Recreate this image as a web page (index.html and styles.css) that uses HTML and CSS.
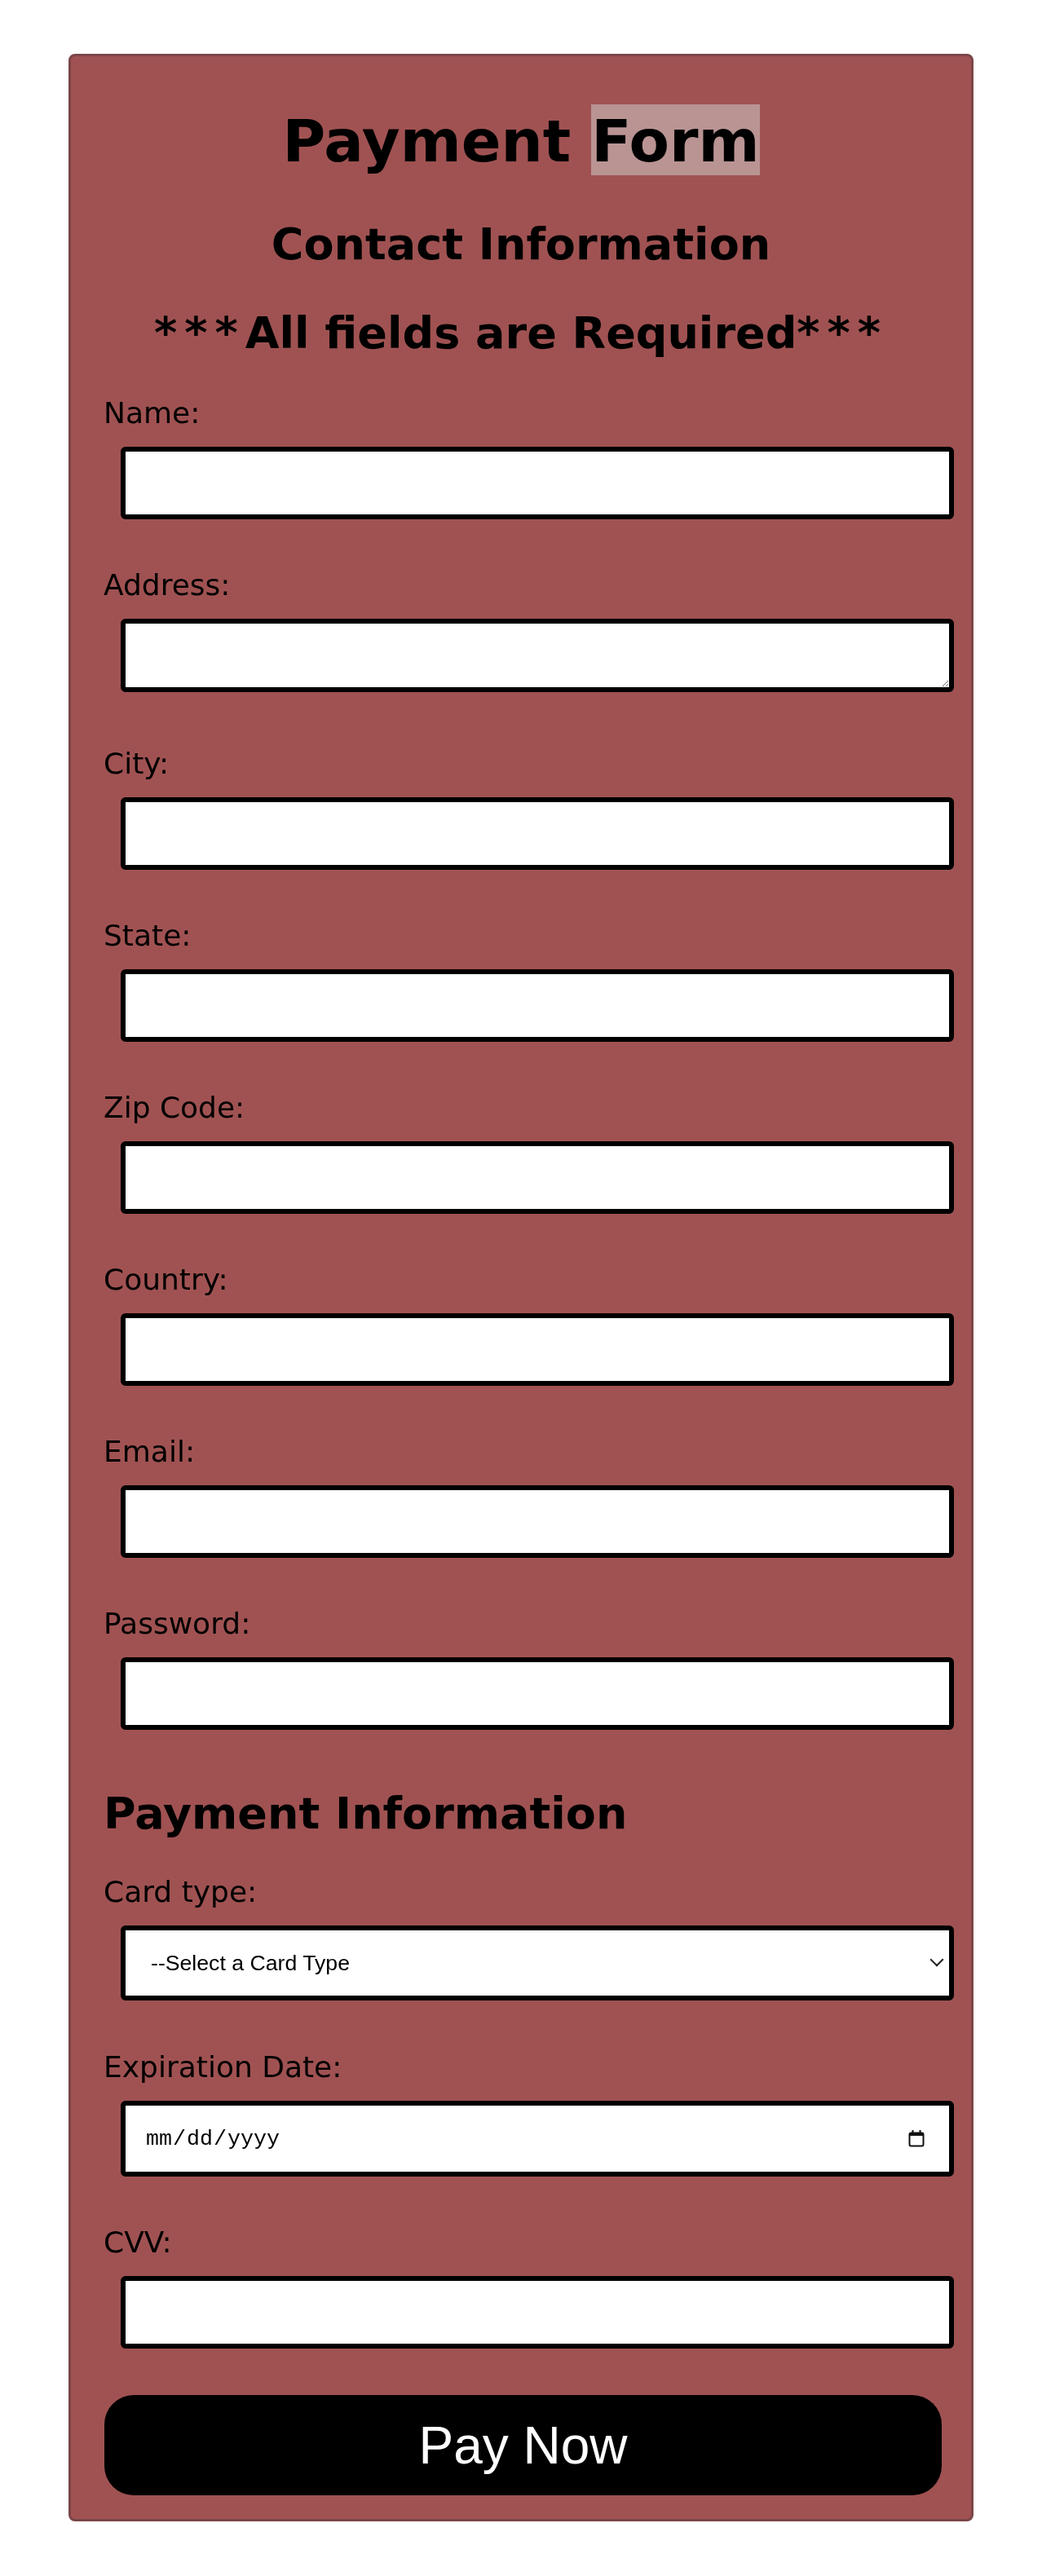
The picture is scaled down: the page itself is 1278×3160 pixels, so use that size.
FILE: index.html
```html
<!DOCTYPE html>
<html lang="en">
<head>
<meta charset="utf-8">
<title>Payment Form</title>
<link rel="stylesheet" href="styles.css">
</head>
<body>
<form class="card">
  <h1 class="title">Payment <span class="hl">Form</span></h1>
  <h2 class="subtitle">Contact Information</h2>
  <h2 class="subtitle"><span class="stars">***</span>All fields are Required<span class="stars">***</span></h2>

  <div class="field">
    <label for="name">Name:</label>
    <input class="control" id="name" type="text">
  </div>
  <div class="field field-area">
    <label for="address">Address:</label>
    <textarea class="control area" id="address"></textarea>
  </div>
  <div class="field">
    <label for="city">City:</label>
    <input class="control" id="city" type="text">
  </div>
  <div class="field">
    <label for="state">State:</label>
    <input class="control" id="state" type="text">
  </div>
  <div class="field">
    <label for="zip">Zip Code:</label>
    <input class="control" id="zip" type="text">
  </div>
  <div class="field">
    <label for="country">Country:</label>
    <input class="control" id="country" type="text">
  </div>
  <div class="field">
    <label for="email">Email:</label>
    <input class="control" id="email" type="email">
  </div>
  <div class="field">
    <label for="password">Password:</label>
    <input class="control" id="password" type="password">
  </div>

  <h2 class="section-title">Payment Information</h2>

  <div class="field field-tall">
    <label for="cardtype">Card type:</label>
    <div class="wrap">
      <select class="control select" id="cardtype">
        <option>--Select a Card Type</option>
        <option>Visa</option>
        <option>MasterCard</option>
        <option>American Express</option>
        <option>Discover</option>
      </select>
      <span class="chevron"></span>
    </div>
  </div>
  <div class="field">
    <label for="exp">Expiration Date:</label>
    <div class="wrap">
      <input class="control date" id="exp" type="date">
      <svg class="cal" width="20" height="22" viewBox="0 0 20 22" aria-hidden="true">
        <rect x="1.5" y="4.5" width="17" height="16" rx="2" fill="#fff" stroke="#111" stroke-width="2"/>
        <rect x="1.5" y="4.5" width="17" height="3.5" fill="#111"/>
        <path d="M5.5 1v4M14.5 1v4" stroke="#111" stroke-width="2"/>
      </svg>
    </div>
  </div>
  <div class="field field-last">
    <label for="cvv">CVV:</label>
    <input class="control" id="cvv" type="text">
  </div>

  <button class="pay" type="submit">Pay Now</button>
</form>
</body>
</html>
```
FILE: styles.css
```css
body {
  margin: 0;
  background: #ffffff;
  font-family: "DejaVu Sans", Verdana, sans-serif;
  color: #000;
}

.card {
  box-sizing: border-box;
  width: 1110px;
  margin: 66px auto 67px;
  padding: 62px 40px 29px;
  background: #a05252;
  border: 3px solid #7b4648;
  border-radius: 8px;
}

.title {
  margin: 0 0 53px;
  font-size: 72px;
  line-height: 84px;
  font-weight: bold;
  text-align: center;
}

.hl {
  padding-top: 3px;
  background: #b99493;
}

.subtitle {
  margin: 0 0 46px;
  font-size: 54px;
  line-height: 63px;
  font-weight: bold;
  text-align: center;
}

.stars {
  letter-spacing: 9px;
}

.section-title {
  margin: 71px 0 44px;
  font-size: 54px;
  line-height: 63px;
  font-weight: bold;
}

.field {
  margin-bottom: 60px;
}

.field-area {
  margin-bottom: 67px;
}

.field-tall {
  margin-bottom: 61px;
}

.field-last {
  margin-bottom: 57px;
}

.field label {
  display: block;
  font-size: 36px;
  line-height: 42px;
}

.control {
  display: block;
  box-sizing: border-box;
  width: calc(100% - 2px);
  height: 89px;
  margin: 20px 0 0 21px;
  padding: 0 24px;
  border: 6px solid #000;
  border-radius: 6px;
  background: #fff;
  color: #000;
  font-family: "Liberation Sans", Arial, sans-serif;
  font-size: 26.67px;
  outline: none;
}

.area {
  height: 90px;
  padding: 24px;
  resize: vertical;
}

.wrap {
  position: relative;
  width: calc(100% - 2px);
  margin: 20px 0 0 21px;
}

.wrap .control {
  width: 100%;
  margin: 0;
}

.select {
  height: 92px;
  padding: 0 60px 0 31px;
  -webkit-appearance: none;
  appearance: none;
}

.chevron {
  position: absolute;
  top: 36px;
  right: 15px;
  width: 10px;
  height: 10px;
  border-right: 2px solid #222;
  border-bottom: 2px solid #222;
  transform: rotate(45deg);
  pointer-events: none;
}

.date {
  height: 93px;
  font-family: "Liberation Mono", "Courier New", monospace;
  font-size: 26.67px;
}

.date::-webkit-calendar-picker-indicator {
  opacity: 0;
}

.cal {
  position: absolute;
  top: 35px;
  right: 36px;
  pointer-events: none;
}

.pay {
  display: block;
  width: calc(100% + 3px);
  height: 123px;
  margin: 0 0 0 1px;
  border: 0;
  border-radius: 36px;
  background: #000;
  color: #fff;
  font-family: "Liberation Sans", Arial, sans-serif;
  font-size: 64px;
  cursor: pointer;
}
```
